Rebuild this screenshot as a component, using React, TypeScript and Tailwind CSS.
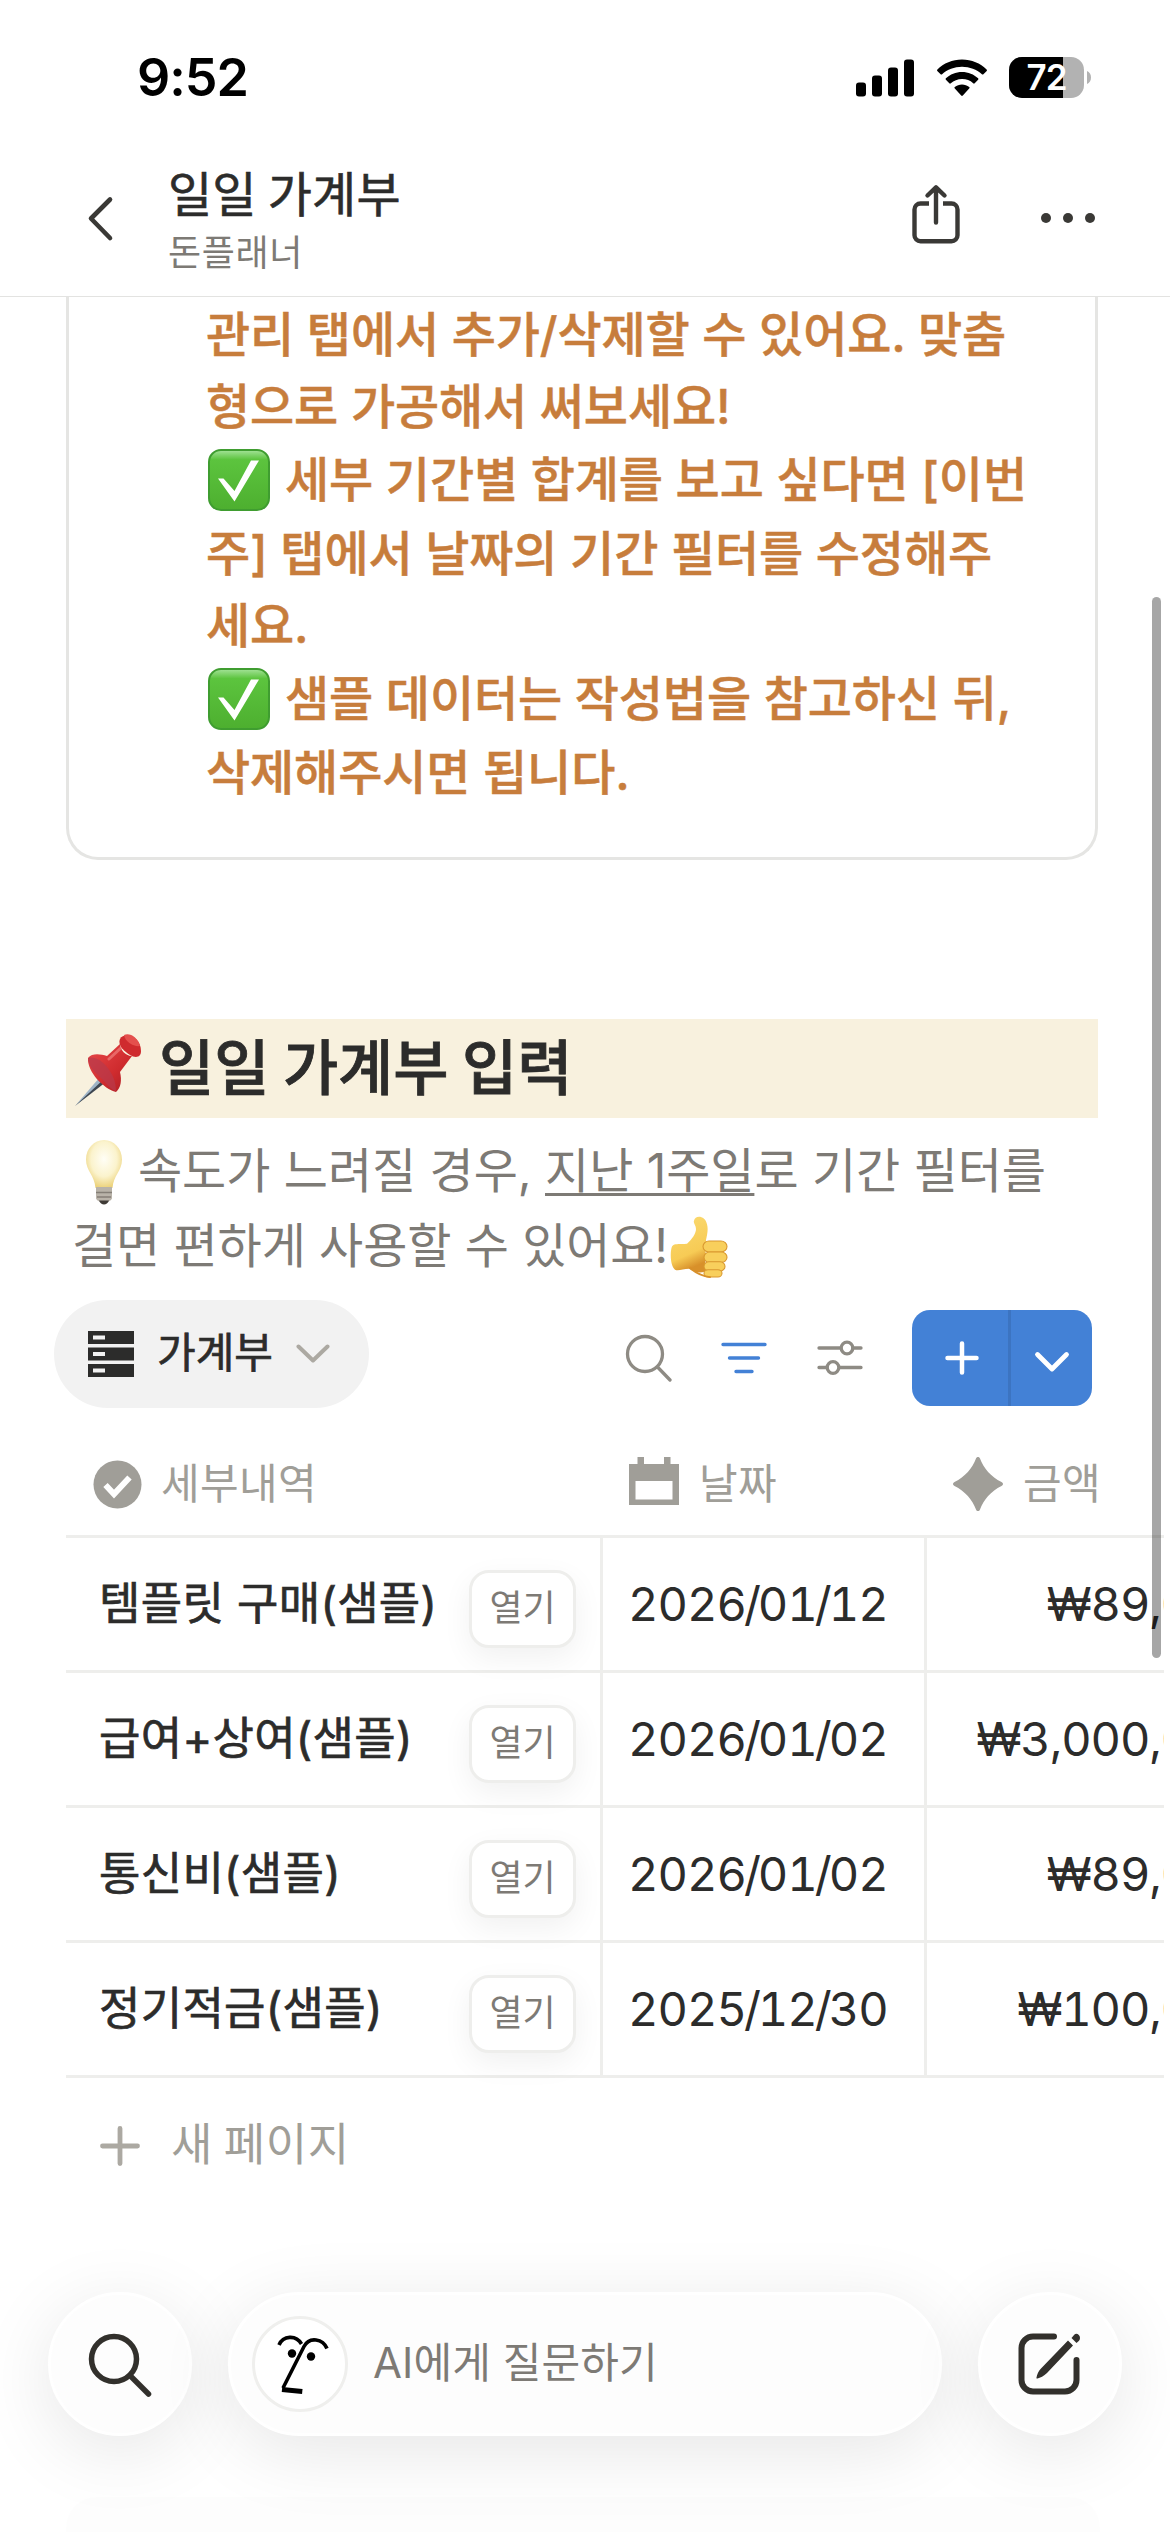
import type { ReactNode } from "react";
import clsx from "clsx";

const rows = [
  { id: 1, title: "템플릿 구매(샘플)", date: "2026/01/12", amount: "₩89,000" },
  { id: 2, title: "급여+상여(샘플)", date: "2026/01/02", amount: "₩3,000,000" },
  { id: 3, title: "통신비(샘플)", date: "2026/01/02", amount: "₩89,000" },
  { id: 4, title: "정기적금(샘플)", date: "2025/12/30", amount: "₩100,000" },
];

function StatusBar() {
  return (
    <div className="flex h-[155px] items-center justify-between pl-[137px] pr-[79px]">
      <span className="font-['Inter'] text-[52px] font-semibold leading-[60px] tracking-[-1px] text-black">
        9:52
      </span>
      <div className="flex items-center">
        <svg width="58" height="38" viewBox="0 0 58 38" className="mr-[23px]">
          <rect x="0" y="23.5" width="10" height="14" rx="3" />
          <rect x="16" y="16.5" width="10" height="21" rx="3" />
          <rect x="32" y="8.5" width="10" height="29" rx="3" />
          <rect x="48" y="0.5" width="10" height="37" rx="3" />
        </svg>
        <svg width="50" height="38" viewBox="0 0 50 38" className="mr-[22px]">
          <path d="M25 .5C34.6.5 43.4 4.3 49.6 10.4c.5.5.5 1 .1 1.5l-3.3 3.3c-.5.5-1 .5-1.5 0C39.7 10.5 32.7 7.7 25 7.7S10.3 10.5 5.1 15.2c-.5.5-1 .5-1.5 0L.3 11.9c-.4-.5-.4-1 .1-1.5C6.6 4.3 15.4.5 25 .5z" />
          <path d="M25 13c6.2 0 11.9 2.4 16.1 6.3.5.5.5 1 0 1.5l-3.4 3.5c-.5.5-1 .5-1.5 0A16.5 16.5 0 0 0 25 20.1c-4.3 0-8.2 1.6-11.2 4.2-.5.5-1 .5-1.5 0l-3.4-3.5c-.5-.5-.5-1 0-1.5C13.1 15.4 18.8 13 25 13z" />
          <path d="M25 25.5c2.7 0 5.2 1 7.2 2.6.5.4.5 1 0 1.5l-6.4 6.9c-.5.5-1.1.5-1.6 0l-6.4-6.9c-.5-.5-.5-1.1 0-1.5 2-1.6 4.5-2.6 7.2-2.6z" />
        </svg>
        <div className="relative flex h-[41px] w-[75px] items-center justify-center overflow-hidden rounded-[13px] bg-[#b2b2b2]">
          <div className="absolute inset-y-0 left-0 w-[54px] bg-black" />
          <span className="relative font-['Inter'] text-[35px] font-semibold leading-[41px] tracking-[-1px] text-white">
            72
          </span>
        </div>
        <svg width="4" height="13" viewBox="0 0 4 13" className="ml-[3px]">
          <path d="M0 0c2.5 1 4 3.5 4 6.5S2.5 12 0 13z" fill="#b2b2b2" />
        </svg>
      </div>
    </div>
  );
}

function NavBar() {
  return (
    <div className="flex h-[141px] items-start pl-[86px] pr-[75px] text-[#3a3936]">
      <svg width="28" height="48" viewBox="0 0 28 48" className="mt-[40px] shrink-0">
        <path
          d="M24 4.5L5 23.5l19 19.5"
          fill="none"
          stroke="currentColor"
          strokeWidth="4.6"
          strokeLinecap="round"
          strokeLinejoin="round"
        />
      </svg>
      <div className="ml-[54px] mt-[6px] flex-1">
        <h1 className="text-[48px] leading-[60px] tracking-[0.2px] text-[#2c2c2b] [-webkit-text-stroke:0.6px_#2c2c2b]">
          일일 가계부
        </h1>
        <p className="mt-[7px] text-[36px] leading-[44px] tracking-[0.6px] text-[#7d7a75]">돈플래너</p>
      </div>
      <svg width="50" height="62" viewBox="0 0 50 62" className="mr-[80px] mt-[29px]">
        <g
          fill="none"
          stroke="currentColor"
          strokeWidth="4.4"
          strokeLinecap="round"
          strokeLinejoin="round"
        >
          <path d="M25 4v34.5M16.5 11.5L25 3.3l8.5 8.2" />
          <path
            d="M18 19.5H9.5a6 6 0 0 0-6 6v25.8a6 6 0 0 0 6 6h31a6 6 0 0 0 6-6V25.5a6 6 0 0 0-6-6H32"
            strokeLinecap="butt"
          />
        </g>
      </svg>
      <svg width="54" height="10" viewBox="0 0 54 10" className="mt-[58px]" fill="currentColor">
        <circle cx="5" cy="5" r="5" />
        <circle cx="27" cy="5" r="5" />
        <circle cx="49" cy="5" r="5" />
      </svg>
    </div>
  );
}

function CheckEmoji() {
  return (
    <svg width="62" height="62" viewBox="0 0 62 62" className="ml-[2px] mr-[15px] mt-[3px] shrink-0">
      <defs>
        <linearGradient id="check-bg" x1="0" y1="0" x2="0" y2="1">
          <stop offset="0" stopColor="#a5e39a" />
          <stop offset="0.16" stopColor="#5cc43e" />
          <stop offset="1" stopColor="#4daf2f" />
        </linearGradient>
      </defs>
      <rect x="1" y="1" width="60" height="60" rx="12" fill="url(#check-bg)" stroke="#3f9d30" strokeWidth="2" />
      <path d="M10 29.5h5.5L26.5 42 43 11.5h8L26.5 52.5z" fill="#fff" />
    </svg>
  );
}

function PinEmoji() {
  return (
    <svg width="68" height="76" viewBox="0 0 68 76" className="shrink-0">
      <defs>
        <linearGradient id="pin-body" x1="0" y1="0" x2="1" y2="1">
          <stop offset="0" stopColor="#e8494a" />
          <stop offset="0.6" stopColor="#cf2b2e" />
          <stop offset="1" stopColor="#a91d24" />
        </linearGradient>
      </defs>
      <path d="M26 46L1 75l30-25z" fill="#9fb4c6" />
      <path d="M30 48L1 75l31-24z" fill="#3d4650" />
      <path d="M14 27c4-5 12-4 19-2L46 13c0 5 5 12 12 12L46 41c2 8 1 16-4 20C30 58 13 41 14 27z" fill="url(#pin-body)" />
      <path d="M14 27c7-2 14 3 19 9s9 14 9 24c-5-1-8-6-14-12S14 36 14 27z" fill="#b83a4c" opacity="0.7" />
      <path d="M35 28L48 16" stroke="#f58a86" strokeWidth="3" strokeLinecap="round" opacity="0.6" />
      <path d="M46 8c4-8 21-3 21 12 0 7-6 7-11 4S43 14 46 8z" fill="#cf2b2e" />
      <path d="M50 4c5-3 14 2 16 11-6 1-15-4-16-11z" fill="#e4504d" />
    </svg>
  );
}

function BulbEmoji() {
  return (
    <svg width="38" height="66" viewBox="0 0 38 66" className="shrink-0">
      <defs>
        <radialGradient id="bulb-glass" cx="0.5" cy="0.4" r="0.6">
          <stop offset="0" stopColor="#fffef6" />
          <stop offset="0.6" stopColor="#fbf3cd" />
          <stop offset="1" stopColor="#ecd27a" />
        </radialGradient>
      </defs>
      <path d="M19 1c10 0 18 8.5 18 19.5C37 32 28.5 36 27.5 49h-17C9.5 36 1 32 1 20.5 1 9.5 9 1 19 1z" fill="url(#bulb-glass)" />
      <path d="M11 48h16v11c0 2-3 3-4 4h-8c-1-1-4-2-4-4z" fill="#b9b3a9" />
      <path d="M11 53.5h16M12 58h14" stroke="#857f77" strokeWidth="1.5" />
      <path d="M14 61.5h10c-1 2.5-3 4-5 4s-4-1.5-5-4z" fill="#3f3b36" />
    </svg>
  );
}

function ThumbEmoji() {
  return (
    <svg width="58" height="62" viewBox="0 0 58 67" preserveAspectRatio="none" className="ml-[2px] shrink-0">
      <defs>
        <linearGradient id="thumb-skin" x1="0" y1="0" x2="0.3" y2="1">
          <stop offset="0" stopColor="#fbdb72" />
          <stop offset="0.75" stopColor="#f7cb55" />
          <stop offset="1" stopColor="#d8902a" />
        </linearGradient>
      </defs>
      <path
        d="M24 5c1-6 11-6 13 4 1.5 6 0 12-1 17l-1 34c-5 2-11 1-16-3-6 0-11 3-14 1C0 54 0 38 2 33c2-4 10-2 15-3 5-5 9-11 9-16 0-4-3-6-2-9z"
        fill="url(#thumb-skin)"
      />
      <g fill="#f8cf5c" stroke="#d9982f" strokeWidth="1.1">
        <rect x="33" y="27" width="24" height="12" rx="6" />
        <rect x="34" y="39" width="23" height="11" rx="5.5" />
        <rect x="34" y="49.5" width="21" height="10" rx="5" />
        <rect x="34" y="58" width="18" height="8" rx="4" />
      </g>
      <path d="M20 56c5 5 12 9 20 10" fill="none" stroke="#d8902a" strokeWidth="2" strokeLinecap="round" />
    </svg>
  );
}

function CalloutLine({ checked, children }: { checked?: boolean; children: ReactNode }) {
  return (
    <div className={clsx("flex items-center whitespace-nowrap", checked ? "h-[75px]" : "h-[72px]")}>
      {checked && <CheckEmoji />}
      <span className="pt-[3px]">{children}</span>
    </div>
  );
}

function Callout() {
  return (
    <div className="ml-[66px] mr-[72px] h-[563px] rounded-b-[32px] border-[3px] border-t-0 border-[#e5e5e3] pl-[137px] font-['Inter','Noto_Sans_CJK_KR',sans-serif] text-[48px] font-medium leading-[72px] tracking-[-0.1px] text-[#c77d3c] [-webkit-text-stroke:0.5px_#c77d3c]">
      <CalloutLine>관리 탭에서 추가/삭제할 수 있어요. 맞춤</CalloutLine>
      <CalloutLine>형으로 가공해서 써보세요!</CalloutLine>
      <CalloutLine checked>세부 기간별 합계를 보고 싶다면 [이번</CalloutLine>
      <CalloutLine>주] 탭에서 날짜의 기간 필터를 수정해주</CalloutLine>
      <CalloutLine>세요.</CalloutLine>
      <CalloutLine checked>샘플 데이터는 작성법을 참고하신 뒤,</CalloutLine>
      <CalloutLine>삭제해주시면 됩니다.</CalloutLine>
    </div>
  );
}

function Toolbar() {
  return (
    <div className="flex h-[108px] items-center pl-[54px] pr-[78px]">
      <button type="button" className="flex h-[108px] w-[315px] items-center rounded-full bg-[#f2f2f2] pl-[34px]">
        <svg width="46" height="46" viewBox="0 0 46 46" fill="#2c2c2b">
          <path fillRule="evenodd" d="M0 0h46v13H0zM5 4.5v4h12v-4z" />
          <path fillRule="evenodd" d="M0 16.5h46v13H0zM5 21v4h12v-4z" />
          <path fillRule="evenodd" d="M0 33h46v13H0zM5 37.5v4h12v-4z" />
        </svg>
        <span className="ml-[23px] pb-[8px] text-[42px] leading-[60px] text-[#2c2c2b] [-webkit-text-stroke:0.7px_#2c2c2b]">
          가계부
        </span>
        <svg width="34" height="20" viewBox="0 0 34 20" className="ml-[23px]">
          <path d="M2.5 2.5L17 16.5l14.5-14" fill="none" stroke="#aca9a2" strokeWidth="4" strokeLinecap="round" strokeLinejoin="round" />
        </svg>
      </button>
      <div className="ml-auto flex items-center pt-[8px]">
        <svg width="48" height="48" viewBox="0 0 48 48" className="mr-[48px]" fill="none" stroke="#8e8b84" strokeWidth="3.3" strokeLinecap="round">
          <circle cx="20" cy="20" r="17.5" />
          <path d="M32.5 33L45 46" />
        </svg>
        <svg width="46" height="48" viewBox="0 0 46 48" className="mr-[50px]" fill="none" stroke="#4381d6" strokeWidth="3.4" strokeLinecap="round">
          <path d="M2 10.5h42M8.5 24h29M15 37.5h16" />
        </svg>
        <svg width="46" height="48" viewBox="0 0 46 48" className="mr-[49px]" fill="none" stroke="#8e8b84" strokeWidth="3.3" strokeLinecap="round">
          <path d="M2 14h21.5M36 14h8M2 33.5h8M22.5 33.5H44" />
          <circle cx="30" cy="14" r="5.8" />
          <circle cx="16" cy="33.5" r="5.8" />
        </svg>
        <div className="flex h-[96px] w-[180px] overflow-hidden rounded-[18px] bg-[#4381d6] text-white">
          <button type="button" className="flex w-[99px] items-center justify-center border-r-[3px] border-[#3c74c1] pl-[3px]">
            <svg width="34" height="34" viewBox="0 0 34 34" fill="none" stroke="currentColor" strokeWidth="4.5" strokeLinecap="round">
              <path d="M17 2.5v29M2.5 17h29" />
            </svg>
          </button>
          <button type="button" className="flex flex-1 items-center justify-center pt-[8px]">
            <svg width="36" height="22" viewBox="0 0 36 22" fill="none" stroke="currentColor" strokeWidth="4.8" strokeLinecap="round" strokeLinejoin="round">
              <path d="M3.5 3.5L18 18 32.5 3.5" />
            </svg>
          </button>
        </div>
      </div>
    </div>
  );
}

function LedgerTable() {
  return (
    <div className="ml-[66px] mr-[6px] overflow-hidden">
      <div className="grid h-[127px] w-[1212px] grid-cols-[537px_324px_351px] items-center text-[42px] leading-[60px] tracking-[0.4px] text-[#a09e98]">
        <div className="flex items-center pl-[27px] pt-[25px]">
          <svg width="49" height="49" viewBox="0 0 49 49">
            <circle cx="24.5" cy="24.5" r="24" fill="#a09e98" />
            <path d="M12.5 25l8.5 9L36.5 17.5" fill="none" stroke="#fff" strokeWidth="6" />
          </svg>
          <span className="ml-[19px] pb-[7px]">세부내역</span>
        </div>
        <div className="flex items-center pl-[26px] pt-[25px]">
          <svg width="50" height="48" viewBox="0 0 50 48" fill="#a09e98" className="-mt-[6px]">
            <path fillRule="evenodd" d="M8.5 0h6.5v7h20V0h6.5v7H50v41H0V7h8.500zM6.500 24v18.500h37V24z" />
          </svg>
          <span className="ml-[20px] pb-[7px]">날짜</span>
        </div>
        <div className="flex items-center pl-[26px] pt-[25px]">
          <svg width="50" height="54" viewBox="0 0 50 54" fill="#a09e98">
            <path d="M23 1.5c.7-2 3.3-2 4 0C30.500 11 38 20 48.500 25c2 1 2 3 0 4C38 34 30.500 43 27 52.500c-.7 2-3.300 2-4 0C19.500 43 12 34 1.500 29c-2-1-2-3 0-4C12 20 19.500 11 23 1.500z" />
          </svg>
          <span className="ml-[20px] pb-[7px]">금액</span>
        </div>
      </div>
      <div className="w-[1212px] border-t-[3px] border-[#eeeeec]">
        {rows.map((row) => (
          <div
            key={row.id}
            className="grid h-[135px] grid-cols-[537px_324px_351px] border-b-[3px] border-[#eeeeec] text-[45px] leading-[60px] text-[#2c2c2b]"
          >
            <div className="flex items-center border-r-[3px] border-[#eeeeec] pl-[33px] pr-[24px]">
              <span className="font-['Inter','Noto_Sans_CJK_KR',sans-serif] tracking-[0.3px] [-webkit-text-stroke:0.7px_#2c2c2b]">
                {row.title}
              </span>
              <button
                type="button"
                className="ml-auto mt-[10px] flex h-[78px] w-[107px] items-center justify-center rounded-[20px] border-[3px] border-[#eeeeec] bg-white pb-[9px] text-[36px] leading-[44px] text-[#7d7a75] shadow-[0_10px_30px_rgba(0,0,0,0.06)]"
              >
                열기
              </button>
            </div>
            <div className="flex items-center border-r-[3px] border-[#eeeeec] pl-[25px] font-['Inter'] text-[47px] tabular-nums tracking-[-1px]">
              {row.date.split("/").map((part, i) => (
                <span key={i}>
                  {i > 0 && <span className="-mx-[2px]">/</span>}
                  {part}
                </span>
              ))}
            </div>
            <div className="flex items-center justify-end pr-[29px] font-['Inter'] text-[47px] tabular-nums tracking-[-1.1px]">
              {row.amount}
            </div>
          </div>
        ))}
      </div>
      <div className="flex h-[134px] items-center pl-[34px] text-[45px] leading-[60px] tracking-[0.6px] text-[#a09e98]">
        <svg width="40" height="40" viewBox="0 0 40 40" className="mt-[2px]" fill="none" stroke="#aca9a2" strokeWidth="4.8" strokeLinecap="round">
          <path d="M20 2.5v35M2.5 20h35" />
        </svg>
        <span className="ml-[31px] pb-[6px]">새 페이지</span>
      </div>
    </div>
  );
}

function BottomBar() {
  return (
    <div className="absolute inset-x-[48px] bottom-[96px] flex h-[144px] gap-[36px] text-[#32302c]">
      <button
        type="button"
        className="flex w-[144px] items-center justify-center rounded-full border-[3px] border-white bg-[#fdfdfd] shadow-[0_15px_75px_rgba(0,0,0,0.1)]"
      >
        <svg width="66" height="66" viewBox="0 0 66 66" fill="none" stroke="currentColor" strokeWidth="5.5" strokeLinecap="round">
          <circle cx="27" cy="28" r="22.5" />
          <path d="M43.5 45L61.5 63" />
        </svg>
      </button>
      <div className="flex flex-1 items-center rounded-full border-[3px] border-white bg-[#fdfdfd] pl-[21px] shadow-[0_15px_75px_rgba(0,0,0,0.1)]">
        <div className="flex size-[96px] items-center justify-center rounded-full border-[3px] border-[#efefed] bg-white pl-[5px]">
          <svg width="52" height="60" viewBox="0 0 52 60" fill="none" stroke="#000" strokeWidth="3.6">
            <path d="M2 11C6 1.5 19 .5 24.5 10" />
            <path d="M50 14.5C46 5 32.5 2 27 12.5L6 54" />
            <path d="M5 55.5l20.3 2" strokeWidth="5" />
            <circle cx="15" cy="19.5" r="4.2" fill="#000" stroke="none" />
            <circle cx="34" cy="22.5" r="4.2" fill="#000" stroke="none" />
          </svg>
        </div>
        <span className="ml-[25px] pb-[3px] font-['Inter','Noto_Sans_CJK_KR',sans-serif] text-[42px] leading-[60px] tracking-[0.1px] text-[#7d7a75]">
          AI에게 질문하기
        </span>
      </div>
      <button
        type="button"
        className="flex w-[144px] items-center justify-center rounded-full border-[3px] border-white bg-[#fdfdfd] shadow-[0_15px_75px_rgba(0,0,0,0.1)]"
      >
        <svg width="64" height="64" viewBox="0 0 64 64" fill="none" stroke="currentColor" strokeWidth="6" strokeLinecap="round">
          <path d="M36 4.5H15A11.5 11.5 0 0 0 3.5 16v32A11.5 11.5 0 0 0 15 59.5h32A11.5 11.5 0 0 0 58.5 48V28" />
          <path d="M50 8.5l5 5L29 41c-3 3-7 5-9.5 5.5-.8.2-1.3-.3-1-1 .5-3 2-6.5 4.5-9z" fill="currentColor" stroke="none" />
          <path d="M56.5 2.5c2-2 5.5.5 5.5 3.5 0 2-1.5 3.5-3.5 5l-5-5z" fill="currentColor" stroke="none" />
        </svg>
      </button>
    </div>
  );
}

export default function App() {
  return (
    <div className="relative h-[2532px] w-[1170px] overflow-hidden bg-white font-['Noto_Sans_CJK_KR',sans-serif]">
      <header className="h-[297px] border-b border-[#e3e3e1]">
        <StatusBar />
        <NavBar />
      </header>
      <main>
        <Callout />
        <div className="ml-[66px] mr-[72px] mt-[159px] flex h-[99px] items-center bg-[#f8f1de] pl-[8px]">
          <PinEmoji />
          <h2 className="ml-[17px] pb-[9px] text-[60px] font-medium leading-[80px] text-[#2c2c2b] [-webkit-text-stroke:0.8px_#2c2c2b]">
            일일 가계부 입력
          </h2>
        </div>
        <div className="ml-[72px] mt-[16px] whitespace-nowrap font-['Inter','Noto_Sans_CJK_KR',sans-serif] text-[48px] leading-[75px] text-[#7d7a75]">
          <p className="flex h-[75px] items-center">
            <span className="ml-[13px] mr-[15px] flex">
              <BulbEmoji />
            </span>
            <span className="pb-[3px] tracking-[-0.05px]">
              속도가 느려질 경우,{" "}
              <span className="underline decoration-[3px] underline-offset-[5px] [text-decoration-skip-ink:none]">
                지난 1주일
              </span>
              로 기간 필터를
            </span>
          </p>
          <p className="flex h-[75px] items-center">
            <span className="pb-[2px] tracking-[-0.1px]">걸면 편하게 사용할 수 있어요!</span>
            <ThumbEmoji />
          </p>
        </div>
        <div className="mt-[16px]">
          <Toolbar />
        </div>
        <LedgerTable />
        <div className="ml-[66px] mr-[70px] mt-[285px] h-[60px] rounded-t-[30px] bg-black/[0.008]" />
      </main>
      <div className="absolute left-[1152px] top-[597px] h-[1061px] w-[9px] rounded-full bg-black/35" />
      <BottomBar />
    </div>
  );
}
